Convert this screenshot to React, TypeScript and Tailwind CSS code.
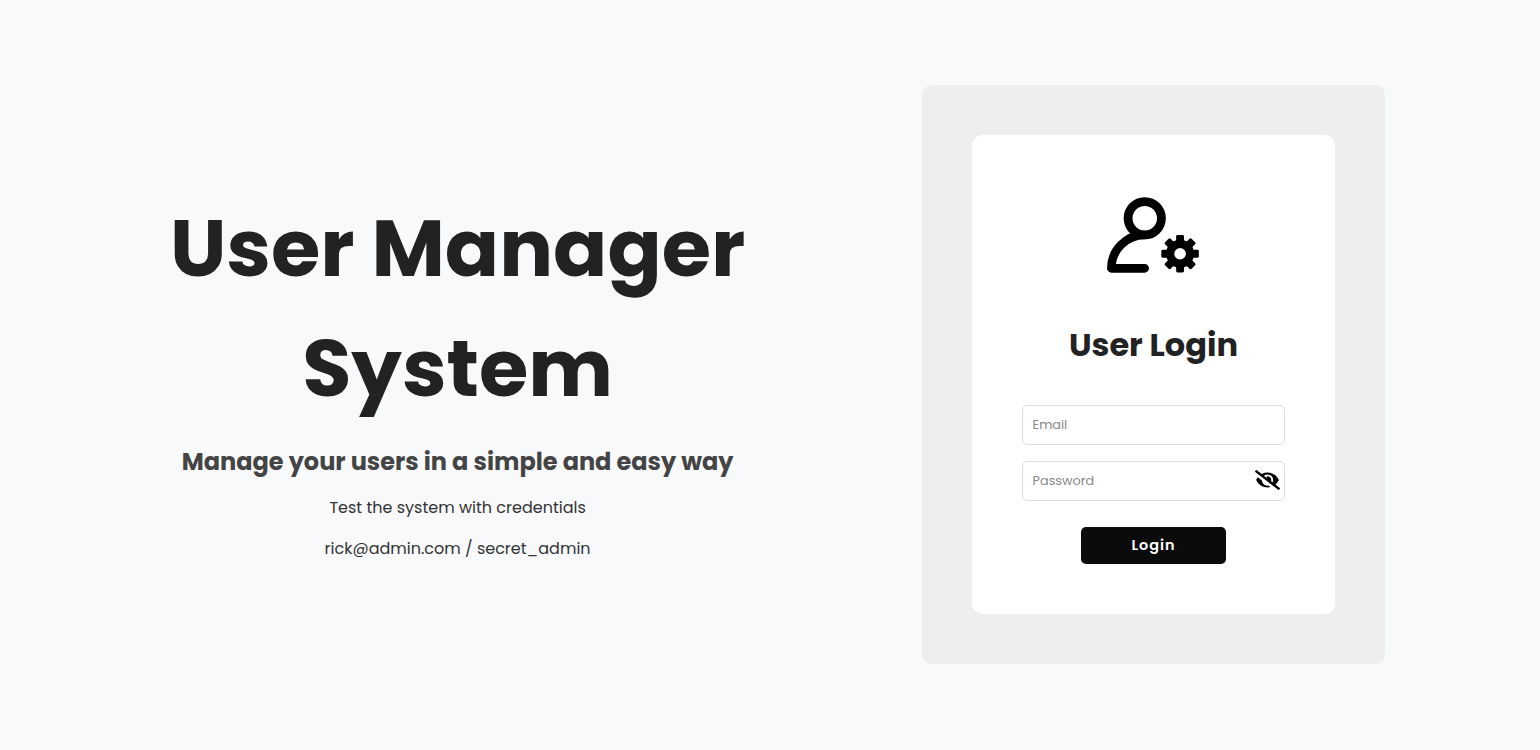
import { useState } from "react";
import { FaEyeSlash } from "react-icons/fa";

const TEETH = [0, 45, 90, 135];

function UserGearIcon() {
  return (
    <svg viewBox="0 0 24 24" className="mr-px size-[100px]" fill="none" stroke="#000" aria-hidden="true">
      <circle cx="10.02" cy="7.98" r="4" strokeWidth="2.12" />
      <path d="M10 12a8 8 0 0 0-8 8h8" strokeWidth="2.06" strokeLinecap="round" strokeLinejoin="round" />
      <g transform="translate(18.5 16.5)">
        <circle r="2.38" strokeWidth="1.96" />
        {TEETH.map((angle) => (
          <g key={angle} transform={`rotate(${angle})`} fill="#000" stroke="none">
            <rect x="-0.95" y="-4.5" width="1.9" height="2.4" rx="0.35" />
            <rect x="-0.95" y="2.1" width="1.9" height="2.4" rx="0.35" />
          </g>
        ))}
      </g>
    </svg>
  );
}

function Intro() {
  return (
    <section className="flex w-[640px] flex-col items-center pb-px text-center whitespace-nowrap">
      <h1 className="text-[80px] leading-[120px] font-bold text-[#222]">
        User Manager
        <br />
        System
      </h1>
      <h2 className="mt-4 text-[24px] leading-9 font-bold text-[#444]">
        Manage your users in a simple and easy way
      </h2>
      <p className="mt-4 text-base text-[#333]">Test the system with credentials</p>
      <p className="mt-[17px] text-base text-[#333]">rick@admin.com / secret_admin</p>
    </section>
  );
}

function LoginCard() {
  const [visible, setVisible] = useState(false);
  return (
    <section className="w-[463px] rounded-[10px] bg-[#eee] p-[50px]">
      <form className="flex h-[479px] flex-col items-center rounded-[10px] bg-white p-[50px]">
        <UserGearIcon />
        <h2 className="mt-9 text-[32px] leading-[48px] font-bold text-[#222]">User Login</h2>
        <input
          type="email"
          placeholder="Email"
          className="mt-9 h-10 w-full shrink-0 rounded-[5px] border border-[#ddd] px-[9.6px] text-[12.8px] placeholder:text-[#888]"
        />
        <div className="mt-4 flex h-10 w-full shrink-0 items-center rounded-[5px] border border-[#ddd] pr-1 pl-[9.6px]">
          <input
            type={visible ? "text" : "password"}
            placeholder="Password"
            className="min-w-0 flex-1 text-[12.8px] placeholder:text-[#888]"
          />
          <button type="button" aria-label="Toggle password" className="pb-0.5" onClick={() => setVisible(!visible)}>
            <FaEyeSlash className="h-5 w-[25px] text-black" />
          </button>
        </div>
        <button
          type="button"
          className="mt-[26px] h-[37px] w-[145px] shrink-0 rounded-[5px] bg-[#0b0b0b] text-[14.4px] font-semibold tracking-[1px] text-white"
        >
          Login
        </button>
      </form>
    </section>
  );
}

export default function App() {
  return (
    <main className="flex h-[750px] w-full items-center bg-[#f8f9fb] pl-[137.6px] font-[Poppins,Inter,sans-serif]">
      <Intro />
      <div className="ml-[144.4px] pb-px">
        <LoginCard />
      </div>
    </main>
  );
}
